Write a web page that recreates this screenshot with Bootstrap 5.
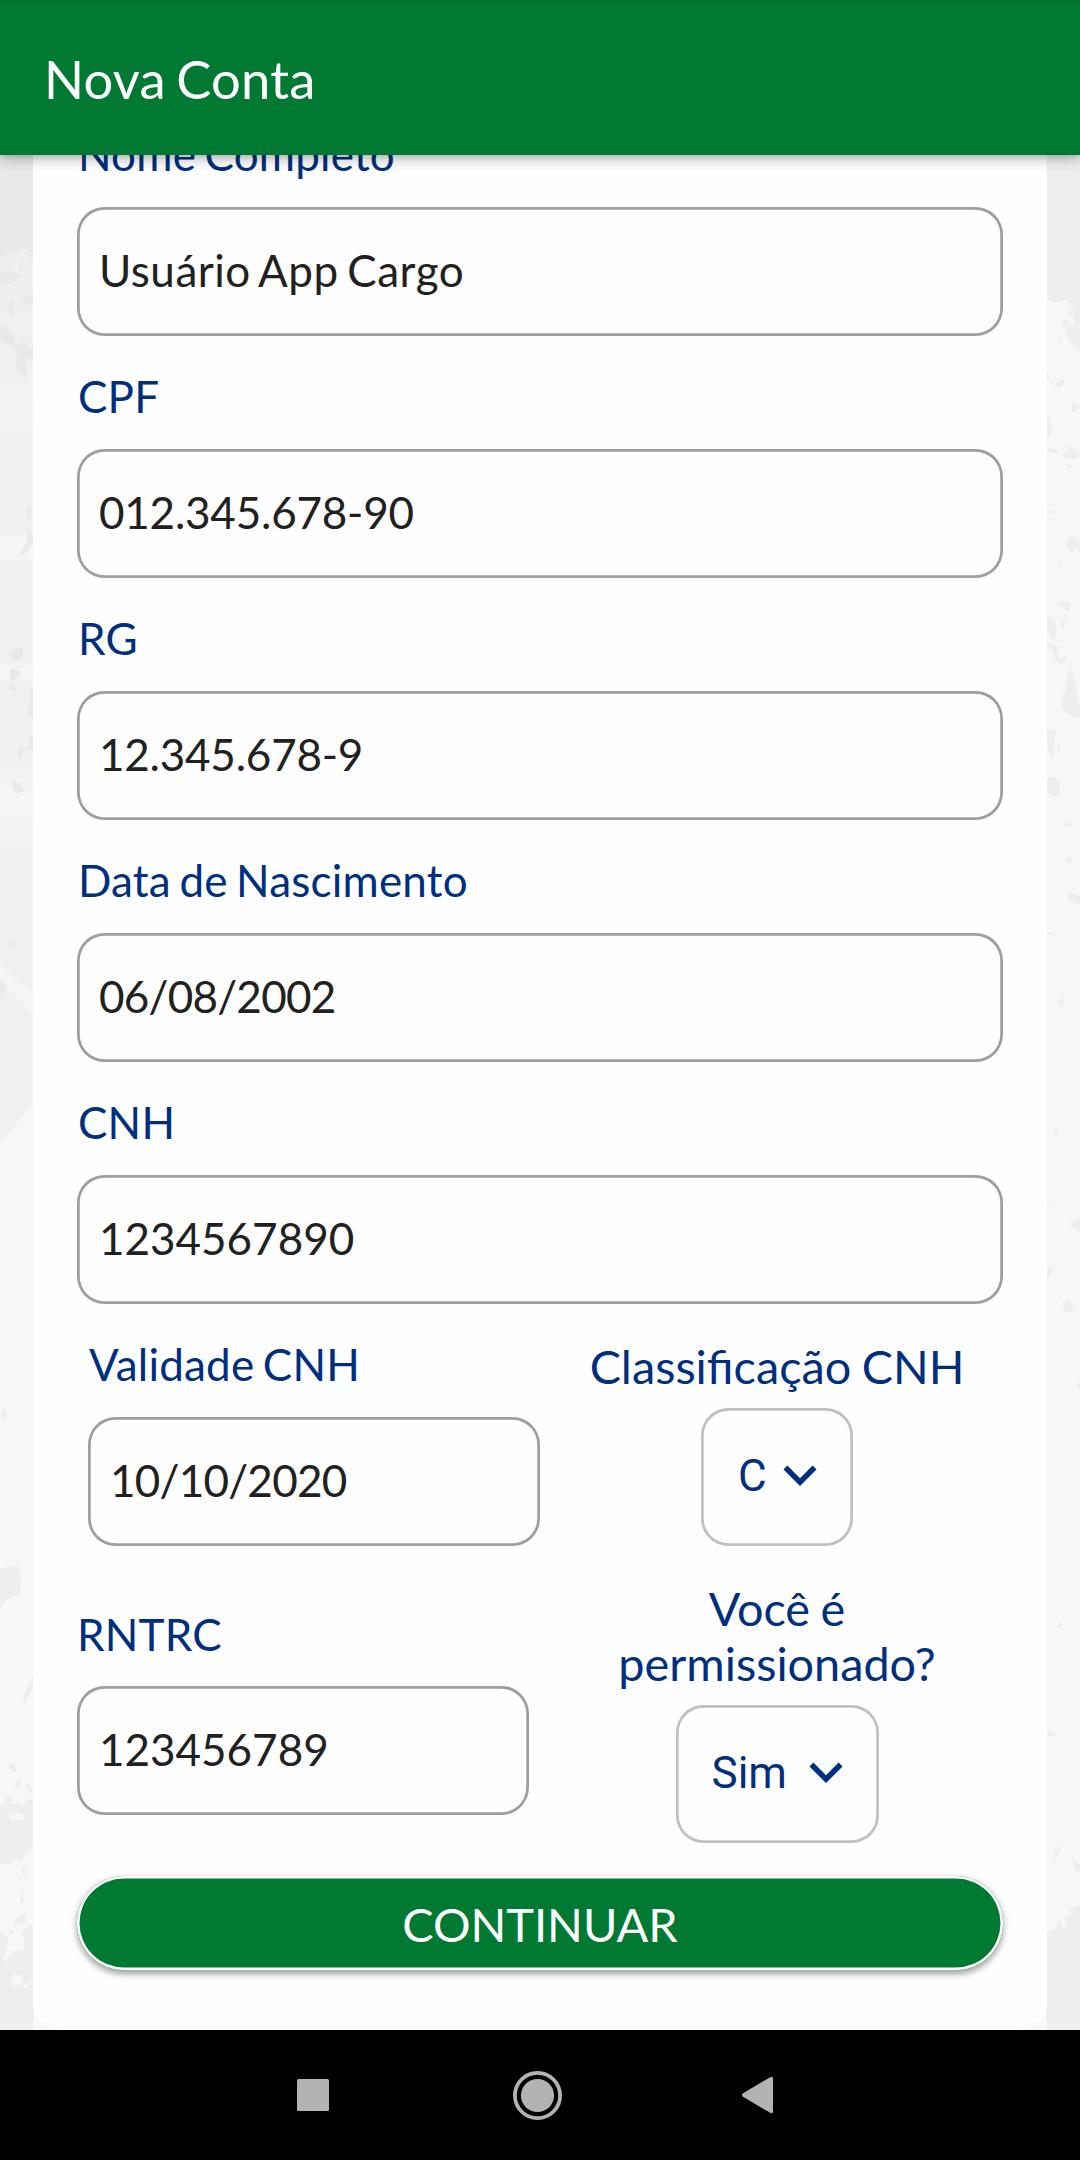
<!DOCTYPE html>
<html lang="pt-BR">
<head>
<meta charset="utf-8">
<meta name="viewport" content="width=device-width, initial-scale=1">
<title>Nova Conta</title>
<link rel="stylesheet" href="https://cdn.jsdelivr.net/npm/bootstrap@5.3.0/dist/css/bootstrap.min.css">
<style>
:root { --verde: #007a33; --azul: #002f80; }
body { font-family: Lato, sans-serif; font-size: 44px; line-height: 53px; height: 2160px; overflow: hidden; background: #f7f7f7; }
.app-bar { height: 155px; background: var(--verde); border-top: 1px solid #056b30; box-shadow: 0 5px 12px rgba(0,0,0,.24), 0 1px 6px rgba(0,0,0,.14); }
.app-title { font-size: 52.5px; color: #fff; padding-left: 44px; letter-spacing: .2px; word-spacing: -3px; }
.screen { height: 2030px; padding: 0 33px; }
.form-panel { background: #fefefe; border-radius: 0 0 27.5px 27.5px; padding: 128px 44px 0; z-index: 1; }
.field-label { display: block; color: var(--azul); height: 53px; margin: 0 0 26px; padding-left: 1px; white-space: nowrap; letter-spacing: .2px; word-spacing: -3px; }
.form-control.field-input { height: 129px; border: 0; border-radius: 27.5px; box-shadow: inset 0 0 0 2.75px #9e9e9e; background: transparent; color: #212121; font-size: 44px; padding: 0 22px 4px; margin-bottom: 34px; }
.form-control.name-input { letter-spacing: .5px; word-spacing: -3px; }
.form-control.doc-input { letter-spacing: -.22px; }
.form-control.date-input { letter-spacing: -.75px; }
.half { width: 452px; }
.inset-half { margin-left: 11px; margin-right: 11px; }
.plain-half { padding-top: 27px; margin-right: 22px; }
.plain-half .field-label { padding-top: 1px; padding-left: 0; }
.side { width: 452px; font-size: 46.75px; line-height: 55px; color: var(--azul); padding-top: 1px; gap: 14px; word-spacing: -1.5px; }
.picker { height: 138px; width: 152px; border: 0; border-radius: 27.5px; box-shadow: inset 0 0 0 2.75px #c0c0c0; color: var(--azul); font: 44px/52px Roboto, sans-serif; padding: 0 20px 2px 37px; }
.picker-wide { width: 203px; padding-left: 36px; }
.picker svg { width: 66px; height: 66px; fill: currentColor; flex: none; margin-top: -2px; }
.go-btn.btn { height: 94px; border: 0; border-radius: 47px; background: var(--verde); color: #fff; font-size: 46.9px; line-height: 55px; padding: 3px 0 0; margin-top: 27px; box-shadow: inset 0 0 0 2.5px #fff, 0 4px 6px rgba(0,0,0,.3), 0 2px 8px rgba(0,0,0,.12); }
.system-bar { height: 130px; padding-left: 297px; }
.system-bar svg { fill: #b3b3b3; display: block; }
.home-key { margin-left: 184px; margin-right: 180px; }
</style>
</head>
<body>
<header class="app-bar navbar fixed-top p-0"><h1 class="app-title fw-normal m-0">Nova Conta</h1></header>
<main class="screen position-relative d-flex flex-column">
  <svg class="position-absolute top-0 start-0" width="1080" height="2030" aria-hidden="true">
    <defs>
      <linearGradient id="haze" x1="0" y1="250" x2="0" y2="860" gradientUnits="userSpaceOnUse">
        <stop offset="0" stop-color="#efefef"/><stop offset=".2" stop-color="#f0f0f0"/><stop offset=".25" stop-color="#f4f4f4"/>
        <stop offset=".29" stop-color="#f4f4f4"/><stop offset=".3" stop-color="#f0f0f0"/><stop offset=".46" stop-color="#f0f0f0"/>
        <stop offset=".48" stop-color="#f6f6f6"/><stop offset=".5" stop-color="#f5f5f5"/><stop offset=".515" stop-color="#f0f0f0"/>
        <stop offset=".67" stop-color="#f0f0f0"/><stop offset=".69" stop-color="#f6f6f6"/><stop offset=".71" stop-color="#f0f0f0"/>
        <stop offset=".84" stop-color="#f0f0f0"/><stop offset=".9" stop-color="#f6f6f6"/><stop offset="1" stop-color="#f0f0f0"/>
      </linearGradient>
    </defs>
    <!-- left edge -->
    <path fill="#e9e9e9" d="M0 140H33V250L0 258Z"/>
    <path fill="url(#haze)" d="M0 257L14 252 33 247V860H0Z"/>
    <path fill="#f0f0f0" d="M0 860H33V1104L0 1143Z"/>
    <path fill="#f5f5f5" d="M0 965L33 994V1016L0 977Z"/>
    <g fill="#e9e9e9">
      <path d="M0 273L10 270 22 276 12 283 0 286ZM28 250l5-1v8l-5 1ZM20 258l4-1-2 14-3-2ZM8 305l7-7-2 12 2 8-6-4ZM0 328l6-3 8 12 4 14-8-6-10-4ZM22 300l11-6v8l-6 3ZM12 345l12-3 9 8v8l-14 2ZM15 360h10l3 18-10-4Z"/>
      <path d="M27 504l5 6-5 11ZM28 528l5 8v8l-10 12-4-2 8-12ZM12 650q8-5 11 0 0 10-8 11-6-4-5-9ZM10 668l11 4-6 9-5-2ZM9 684q7 0 6 7-6 0-6-7ZM31 690l2 0v28l-5-4ZM30 735l3 0v14l-6 2ZM18 747l7 2-6 12ZM13 780q8 4 12 10-5 5-10 2-4-5-2-12ZM8 942q5-3 7 3-5 5-8 1ZM0 980q6 4 5 12L0 995Z"/>
    </g>
    <g fill="#eeeeee">
      <ellipse cx="4" cy="1414" rx="3" ry="4.5"/>
      <path d="M0 1569q10-4 19-2 3 14 1 31-10-6-18 8H0ZM33 1676l-5 10q-7 12-3 18 3-10 8-16Z"/>
      <path d="M10 1763q5-3 7 5-1 6-6 3-3-3-1-8ZM16 1782q4-6 5 1-1 5-4 5-3-2-1-6ZM27 1783q6 3 5 11-6-2-5-11Z"/>
      <path d="M0 1806l5-2q1-10 5-8l2 8 6-1 5 3 4-6 6-1V1846l-8 8-3 8-8-4-4 6H0Z"/>
      <path d="M22 1866q5 3 3 10-5-3-3-10ZM21 1892q5 5 1 12-3-3-1-12ZM14 1921q5-8 12-7v8l-12 5Z"/>
      <path d="M0 1932l8 4 2-6 10 4 10-10 3 2V2030H0Z"/>
    </g>
    <path fill="#f7f7f7" d="M7 1812l8 4 3-4 7 4-3 5-6-2-5 1ZM6 1950l3-14 8-6 8 8-2 14-8-2-4 6-7 2ZM2 1960l3-6 4 8ZM10 1985l5-13 6 6 2 8 5-4 5-2-7 8-5-3Z"/>
    <!-- right edge -->
    <path fill="#eeeeee" d="M1047 140H1080V296L1073 306 1066 300 1058 303 1047 300Z"/>
    <g fill="#eeeeee">
      <path d="M1080 298l-6 4-1 7-5 2 1 5 4-1 2 9-9 4 2 10 8 12 4 1ZM1063 320l5-1 2 5-4 4-4-3ZM1060 326l1 3-1 1ZM1058 336l4 3-3 3ZM1047 370l3 8-3 1ZM1054 386l7-7 4 1-4 8-5-1ZM1072 404l8 1-2 5-6 2ZM1047 415l3 1v6l4 3-5 12-2 1ZM1047 448l8 1 5 5-13-2ZM1062 452l5 1 1-9 4 4 6 2 2 5-4 4-12-1ZM1065 462l6 4-1 3ZM1047 508l4 4-4 4ZM1066 543q2-7 10-6l4 5v12l-3-6-6 5ZM1060 561l4 4-7 4 2-3ZM1057 605l2-4 11 1-1 11-6-6ZM1066 616l2 0-5 12-3-2ZM1047 615q10 4 10 16l-3 10-7-6ZM1047 642l11 4 1 12 8-3-5 11-6-5-5-14-4 3ZM1070 669q6 8 7 28l3 12v9q-14-1-19-15 0-7 5-12-1-14 4-22ZM1047 730h9q-3 12-2 30l-7-10ZM1057 744l3 0v6l-3 1ZM1050 775l10 6-1 8v8l-12-3v-14Z"/>
      <path d="M1064 822l8 2-3 3-6-1ZM1066 857l6-1v6l-5 2ZM1068 892l12 4v8l-12-3ZM1047 932l10 1-10 2ZM1058 1000l6-2-1 8-5-1ZM1053 1130q5-2 5 5-5 2-5-5ZM1047 1203l4 4-4 1ZM1071 1222l9-4v14l-9-6ZM1047 1265l7 4-7 12ZM1062 1303l7-3 5 10-8 3ZM1077 1385l3-3v7ZM1056 1626l6-4v8ZM1047 1730l9 4-3 2-6-1ZM1054 1856q2-9 8-10-1 4-4 8l-2 6ZM1072 1857l8 8v8l-6-4Z"/>
      <path d="M1047 1931l8-2 4-9 6-2 5-10 8-2 2-4V2030H1047Z"/>
    </g>
    <path fill="#f7f7f7" d="M1060 1922l4-6 4 8-5 4ZM1066 1910l7 2-5 5Z"/>
  </svg>
  <form class="form-panel position-relative flex-grow-1">
    <label class="field-label" for="nome">Nome Completo</label>
    <input id="nome" class="form-control field-input name-input" value="Usuário App Cargo">
    <label class="field-label" for="cpf">CPF</label>
    <input id="cpf" class="form-control field-input doc-input" value="012.345.678-90">
    <label class="field-label" for="rg">RG</label>
    <input id="rg" class="form-control field-input doc-input" value="12.345.678-9">
    <label class="field-label" for="nasc">Data de Nascimento</label>
    <input id="nasc" class="form-control field-input date-input" value="06/08/2002">
    <label class="field-label" for="cnh">CNH</label>
    <input id="cnh" class="form-control field-input" value="1234567890">
    <div class="d-flex">
      <div class="half inset-half">
        <label class="field-label" for="validade">Validade CNH</label>
        <input id="validade" class="form-control field-input date-input" value="10/10/2020">
      </div>
      <div class="side d-flex flex-column align-items-center text-center">
        <div>Classificação CNH</div>
        <button type="button" class="picker bg-transparent d-flex align-items-center justify-content-between">C
          <svg viewBox="0 0 24 24"><path d="M7.41 8.59 12 13.17l4.59-4.58L18 10l-6 6-6-6z"/></svg></button>
      </div>
    </div>
    <div class="d-flex">
      <div class="half plain-half">
        <label class="field-label" for="rntrc">RNTRC</label>
        <input id="rntrc" class="form-control field-input" value="123456789">
      </div>
      <div class="side d-flex flex-column align-items-center text-center">
        <div>Você é<br>permissionado?</div>
        <button type="button" class="picker picker-wide bg-transparent d-flex align-items-center justify-content-between">Sim
          <svg viewBox="0 0 24 24"><path d="M7.41 8.59 12 13.17l4.59-4.58L18 10l-6 6-6-6z"/></svg></button>
      </div>
    </div>
    <button type="button" class="btn go-btn w-100">CONTINUAR</button>
  </form>
</main>
<footer class="system-bar bg-black d-flex align-items-center">
  <svg width="32" height="32"><rect width="32" height="32" rx="1.5"/></svg>
  <svg class="home-key" width="49" height="49"><circle cx="24.5" cy="24.5" r="22.6" fill="none" stroke="#b3b3b3" stroke-width="3.8"/><circle cx="24.5" cy="24.5" r="16.6"/></svg>
  <svg width="32" height="38"><path d="M1 17.2 28.6.9Q31 0 31 2.4V35.6Q31 38 28.6 37.1L1 20.8Q-1 19 1 17.2Z"/></svg>
</footer>
<script src="https://cdn.jsdelivr.net/npm/bootstrap@5.3.0/dist/js/bootstrap.bundle.min.js"></script>
</body>
</html>
